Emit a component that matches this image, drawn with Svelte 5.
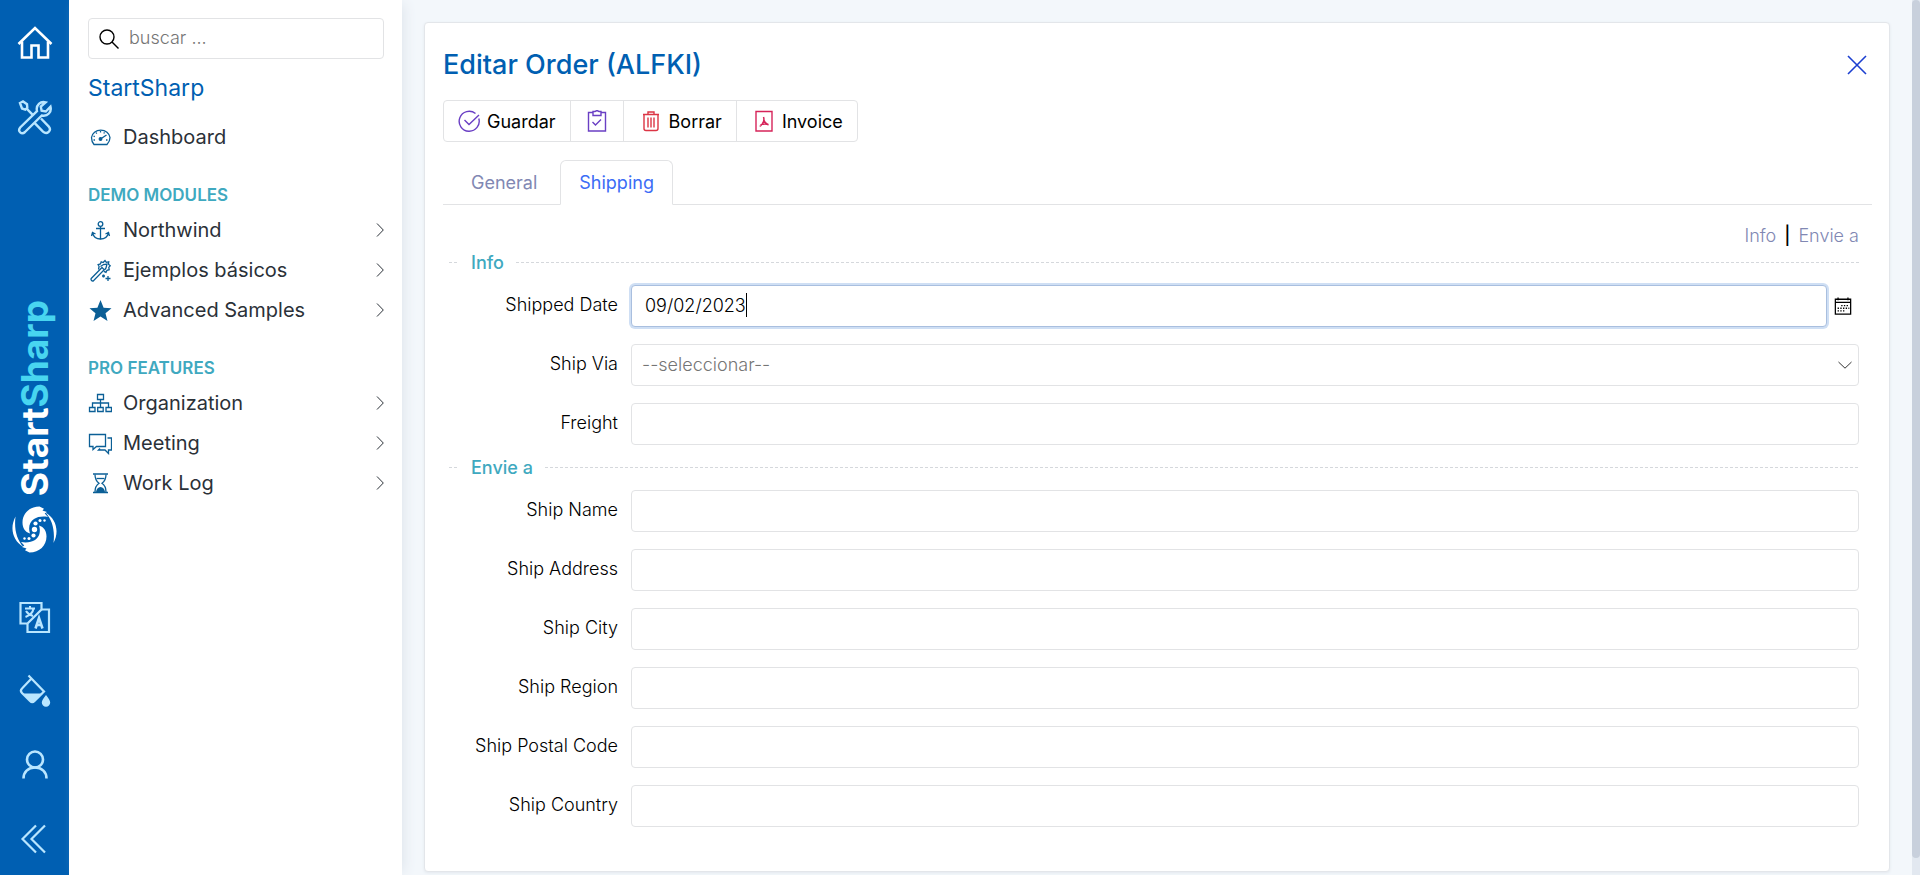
<script>
  const groups = [
    {
      title: 'DEMO MODULES',
      items: [
        { label: 'Northwind', icon: 'anchor' },
        { label: 'Ejemplos básicos', icon: 'wand' },
        { label: 'Advanced Samples', icon: 'star' }
      ]
    },
    {
      title: 'PRO FEATURES',
      items: [
        { label: 'Organization', icon: 'org' },
        { label: 'Meeting', icon: 'chat' },
        { label: 'Work Log', icon: 'hourglass' }
      ]
    }
  ];

  const shipFields = [
    { id: 'ship-name', label: 'Ship Name' },
    { id: 'ship-address', label: 'Ship Address' },
    { id: 'ship-city', label: 'Ship City' },
    { id: 'ship-region', label: 'Ship Region' },
    { id: 'ship-postal-code', label: 'Ship Postal Code' },
    { id: 'ship-country', label: 'Ship Country' }
  ];

  let shippedDate = $state('09/02/2023');
</script>

{#snippet menuIcon(name)}
  <svg class="menu-icon" viewBox="0 0 24 24" aria-hidden="true">
    {#if name === 'gauge'}
      <path d="M6 19.500h13c2-2 3-4.300 3-7A9.300 8.300 0 0 0 3.500 12.500c0 2.700.8 5 2.500 7z" />
      <path d="M12.500 14l6-4" />
      <circle cx="12.500" cy="14" r="1.300" fill="currentColor" />
      <path d="M12.500 6v1.500M8 7.500l.8 1.200M5.500 11l1.300.6M5.500 15h1.500M18 15h1.500M16.500 7.300l-.7 1.200" />
    {:else if name === 'anchor'}
      <circle cx="12.500" cy="6" r="2.300" />
      <path d="M12.500 8.300v13M8 10.500h9" />
      <path d="M4.500 15c1 3.800 4.200 6 8 6s7-2.200 8-6M3.500 18l1-3.500 3 1.500M21.500 18l-1-3.500-3 1.500" />
    {:else if name === 'wand'}
      <path d="M3.200 20.500L14 9.500l2.200 2.200L5.500 22.800c-1.500.7-3-.8-2.300-2.300z" />
      <path d="M10.500 11.500l.6-3-1-1.800 2.300-.8.8-2 2 .6L17 2.500l1.300 1.800 2.400-.4-.2 2.400 1.700 1.500-1.400 1.600.4 2.300-2.200.6-1 2-2.200-1" />
      <path d="M12.500 8.500l3-2 3.500-.5-1 4-1.500 2" />
      <path d="M20 18v5M17.500 20.500h5" />
      <path d="M15.500 16.500v3M14 18h3" stroke-width="1.600" />
    {:else if name === 'star'}
      <path
        d="M12.500 2l3.100 7.700 7.900.6-6 5 2 7.700-7-4.400-7 4.400 2-7.700-6-5 7.900-.6z"
        fill="currentColor"
        stroke="none"
      />
    {:else if name === 'org'}
      <path d="M9.500 3.500h6v5h-6zM1.500 16.500h5.500v4H1.500zM9.700 16.500h5.500v4H9.700zM18 16.500h5.500v4H18z" />
      <path d="M12.500 8.500v8M4.500 16.500v-4.500h16v4.500" />
    {:else if name === 'chat'}
      <path d="M1.500 3.500h16v12H8.500l-3.500 3v-3H1.500z" />
      <path d="M19.500 7h4v12h-3v3.500L17 19h-6.500l1.500-1.500" />
    {:else if name === 'hourglass'}
      <path d="M5 3h15M5 21.500h15" stroke-width="1.600" />
      <path d="M7 3.500c0 4.500 1.500 7 4 8.800C8.500 14 7 16.500 7 21M18 3.500c0 4.500-1.500 7-4 8.800 2.500 1.700 4 4.200 4 8.700" />
      <path d="M8 21c.3-3 2-4.500 4.500-5 2.500.5 4.200 2 4.500 5z" fill="currentColor" stroke="none" />
      <path d="M8.500 7.500h8" />
    {/if}
  </svg>
{/snippet}

<div class="shell">
  <nav class="rail" aria-label="Principal">
    <a class="rail-item active" href="#home" aria-label="Inicio">
      <svg viewBox="0 0 36 36" stroke-width="2.600" aria-hidden="true">
        <path d="M1.500 19L18 3l16.500 16" />
        <path d="M5 16.500V32.500h9.500V20.500h7v12H31V16.500" />
      </svg>
    </a>
    <a class="rail-item" href="#tools" aria-label="Herramientas">
      <svg viewBox="0 0 36 36" stroke-width="2.400" aria-hidden="true">
        <path d="M3 4l3-1.500L10 5.200l.3 3.600-2 1.800L5 9.500z" />
        <path d="M9.500 9.500l6 6.200" />
        <path
          d="M28.700 3.300c-5-1.500-10.200 2.500-8.700 8.900L3.200 28.500c-3 4 1.500 7.500 4.800 4.500l16.800-16.500c6 1.200 10-3.500 8.700-8.800l-4.700 4.800-4.200-.8-.8-4.200z"
        />
        <path d="M17.700 24.200l8.300 8.400c4 3.600 9.200-1.200 5.600-5.200L24 19.500" />
      </svg>
    </a>

    <a class="brand" href="#start">
      <span class="wordmark">Start<span class="accent">Sharp</span></span>
      <svg viewBox="0 0 46 48" aria-hidden="true">
        <path
          d="M27.500.5C17.500.5 10.500 7.500 10.500 16.500c0 5.500 2.500 9.500 7.500 11-2-6-.5-11.500 4-14.500 3.500-2.300 9-3 14-2l-3.300-3.500L35 6l-4.500-1.500L32 2.800z"
        />
        <path
          d="M17.500 46.500c10 0 17-7 17-16 0-5.500-2.500-9.500-7.500-11 2 6 .5 11.500-4 14.500-3.500 2.300-9 3-14 2l3.300 3.500L10 41l4.500 1.500L13 44.200z"
        />
        <path d="M3.500 10.500C-2.500 22 .5 34.500 11.500 41 4.500 33.500 2 23 3.500 10.500z" />
        <path d="M41.500 37C47.500 25.500 44.500 13 33.500 6.500c7 7.500 9.500 18 8 30.500z" />
        <circle cx="22.500" cy="23.500" r="2.700" />
        <circle cx="23.500" cy="17.500" r="2.100" />
        <circle cx="28" cy="14.500" r="1.500" />
        <circle cx="32.500" cy="14.500" r="1.200" />
        <circle cx="21.500" cy="29.500" r="2.100" />
        <circle cx="17" cy="32.500" r="1.500" />
        <circle cx="12.500" cy="32.500" r="1.200" />
      </svg>
    </a>

    <button class="rail-item" aria-label="Idioma">
      <svg viewBox="0 0 36 36" stroke-width="2.200" aria-hidden="true">
        <path d="M10.500 24.500H3.500V4h21v6.500L10.500 24.500" />
        <path d="M24.500 10.500h7.500V33h-21.500v-8.500" />
        <path d="M8 9.500h10M13 7v2.500M16.500 9.500c-.5 3.500-3 6.500-8 8.500M9 12c1.500 2.500 4 4 7 5" stroke-width="2" />
        <path d="M18.500 29.500L22 19l3.500 10.500M20 26h4" stroke-width="2.600" />
      </svg>
    </button>
    <button class="rail-item" aria-label="Tema">
      <svg viewBox="0 0 36 36" stroke-width="2.200" aria-hidden="true">
        <path d="M11.500 2.500l15.500 16-9.500 9.500c-1.500 1.500-3 1.500-4.500 0l-8-8c-1.500-1.500-1.500-3 0-4.500l9-9.500" />
        <path d="M5.500 20.500h20.500l-8.500 8h-4z" fill="currentColor" stroke="none" />
        <path
          d="M29 22c2.500 3.500 4.200 5.500 4.200 7.500a4.200 4.200 0 0 1-8.400 0c0-2 1.700-4 4.200-7.500z"
          fill="currentColor"
          stroke="none"
        />
      </svg>
    </button>
    <button class="rail-item" aria-label="Usuario">
      <svg viewBox="0 0 36 36" stroke-width="2.600" aria-hidden="true">
        <circle cx="18" cy="12.500" r="8" />
        <path d="M6.500 31.500c0-6.500 4.500-11 11.500-11s11.500 4.500 11.500 11" />
      </svg>
    </button>
    <button class="rail-item" aria-label="Contraer menú">
      <svg viewBox="0 0 36 36" stroke-width="2.200" aria-hidden="true">
        <path d="M19 4.500L5.500 18 19 31.500M28 4.500L14.500 18 28 31.500" />
      </svg>
    </button>
  </nav>

  <aside class="sidebar">
    <label class="search">
      <svg viewBox="0 0 20 20" aria-hidden="true">
        <circle cx="8" cy="8" r="7" />
        <path d="M13 13l6.500 6.500" />
      </svg>
      <input type="search" placeholder="buscar ..." aria-label="buscar" />
    </label>
    <h2>StartSharp</h2>
    <a class="menu-link" href="#dashboard">
      {@render menuIcon('gauge')}
      <span>Dashboard</span>
    </a>
    {#each groups as group}
      <h3>{group.title}</h3>
      {#each group.items as item}
        <a class="menu-link" href="#{item.icon}">
          {@render menuIcon(item.icon)}
          <span>{item.label}</span>
          <svg class="chevron" viewBox="0 0 8 14" aria-hidden="true"><path d="M1 0.500L7.300 7 1 13.500" /></svg>
        </a>
      {/each}
    {/each}
  </aside>

  <main>
    <section class="card">
      <header>
        <h1>Editar Order (ALFKI)</h1>
        <button class="close" aria-label="Cerrar">
          <svg viewBox="0 0 20 20" aria-hidden="true"><path d="M1 1l18 18M19 1L1 19" /></svg>
        </button>
      </header>

      <div class="toolbar">
        <button class="purple">
          <svg viewBox="0 0 22 22" aria-hidden="true">
            <path d="M20.800 8.500A10 10 0 1 1 17.500 3.500" />
            <path d="M6.500 10l4.500 4.500L21 5" />
          </svg>
          Guardar
        </button>
        <button class="purple" aria-label="Guardar y continuar">
          <svg viewBox="0 0 22 22" aria-hidden="true">
            <path d="M7 2.500H2.500v18.500h17V2.500H15" />
            <path d="M7 1.500v4h8v-4h-2L11 .5l-2 1z" />
            <path d="M6.500 12l3 3L15 9.500" />
          </svg>
        </button>
        <button class="red">
          <svg viewBox="0 0 22 22" aria-hidden="true">
            <path d="M3 4.500h16M8 4.500V2h6v2.500" />
            <path d="M4 4.500v14c0 1.500.5 2 2 2h10c1.500 0 2-.5 2-2v-14" />
            <path d="M8 7.500v10M11 7.500v10M14 7.500v10" />
          </svg>
          Borrar
        </button>
        <button class="crimson">
          <svg viewBox="0 0 22 22" aria-hidden="true">
            <path d="M3 1.500h16v19.500H3z" />
            <path d="M10.500 7c.8 2 .3 4.500-1 6.500-.8 1.500-1.800 2.500-2.800 2.800M10.800 10c.7 2.300 2.200 4 4.700 5M7.500 15c2.500-1.300 5-1.500 8-.5" stroke-width="1.500" />
          </svg>
          Invoice
        </button>
      </div>

      <div class="tabs" role="tablist">
        <button role="tab" aria-selected="false">General</button>
        <button role="tab" aria-selected="true" class="selected">Shipping</button>
      </div>

      <form>
        <nav class="anchors" aria-label="Secciones">
          <a href="#info">Info</a>
          <span class="bar">|</span>
          <a href="#envie">Envie a</a>
        </nav>

        <h4 id="info">Info</h4>
        <div class="fields">
          <div class="field">
            <label for="shipped-date">Shipped Date</label>
            <div class="date">
              <div class="date-box">
                <input id="shipped-date" type="text" bind:value={shippedDate} />
                <span class="caret"></span>
              </div>
              <button type="button" aria-label="Abrir calendario">
                <svg viewBox="0 0 20 20" aria-hidden="true">
                  <path d="M1.500 2.500h17v16.500h-17zM1.500 6h17" />
                  <path d="M4.500.5v3M15.500.5v3" />
                  <path d="M8 9.500h9M4 12.500h13M4 15.500h9" stroke-dasharray="1.500 1.500" />
                </svg>
              </button>
            </div>
          </div>
          <div class="field">
            <label for="ship-via">Ship Via</label>
            <div class="select">
              <select id="ship-via">
                <option>--seleccionar--</option>
              </select>
              <svg viewBox="0 0 14 8" aria-hidden="true"><path d="M0.500 1L7 7.200 13.500 1" /></svg>
            </div>
          </div>
          <div class="field">
            <label for="freight">Freight</label>
            <input id="freight" type="text" />
          </div>
        </div>

        <h4 id="envie">Envie a</h4>
        <div class="fields">
          {#each shipFields as field}
            <div class="field">
              <label for={field.id}>{field.label}</label>
              <input id={field.id} type="text" />
            </div>
          {/each}
        </div>
      </form>
    </section>
  </main>

  <div class="scrollbar" aria-hidden="true"><div class="thumb"></div></div>
</div>

<style>
  :global(body) {
    background: #f3f7fb;
  }

  .shell,
  .shell * {
    box-sizing: border-box;
  }

  .shell {
    display: flex;
    min-height: 100vh;
    font-family: Inter, 'Open Sans', sans-serif;
    font-size: 18px;
    font-weight: 300;
    color: #000;
  }

  button,
  input,
  select {
    font: inherit;
    color: inherit;
  }

  button {
    background: none;
    border: 0;
    padding: 0;
    cursor: pointer;
  }

  a {
    color: inherit;
    text-decoration: none;
  }

  svg {
    fill: none;
    stroke: currentColor;
    flex: none;
    display: block;
  }

  h1,
  h2,
  h3,
  h4 {
    margin: 0;
  }

  .rail {
    flex: none;
    width: 69px;
    background: #005fb2;
    color: #b9e6ff;
    display: flex;
    flex-direction: column;
    padding-top: 6px;
  }

  .rail-item {
    height: 74px;
    display: flex;
    align-items: center;
    justify-content: center;
  }

  .rail-item svg {
    width: 36px;
    height: 36px;
  }

  .rail-item.active {
    color: #fff;
  }

  .brand {
    margin-top: auto;
    padding-bottom: 26px;
    display: flex;
    flex-direction: column;
    align-items: center;
    gap: 10px;
    color: #fff;
  }

  .brand svg {
    width: 46px;
    height: 48px;
    fill: currentColor;
    stroke: none;
  }

  .wordmark {
    writing-mode: vertical-rl;
    transform: rotate(180deg);
    font-size: 37px;
    line-height: 44px;
    font-weight: 700;
  }

  .accent {
    color: #48d5f0;
  }

  .sidebar {
    flex: none;
    width: 333px;
    background: #fff;
    padding: 18px 18px 0 19px;
    box-shadow: 6px 0 12px -4px #dfe5ec;
  }

  .search {
    display: flex;
    align-items: center;
    gap: 10px;
    height: 41px;
    padding: 0 10px;
    border: 1px solid #e2e3e5;
    border-radius: 4px;
  }

  .search svg {
    width: 20px;
    height: 20px;
    stroke-width: 1.400;
  }

  .search input {
    flex: 1;
    min-width: 0;
    border: 0;
    outline: 0;
    padding: 0 0 2px;
    background: none;
  }

  .search input::placeholder {
    color: #757575;
    opacity: 1;
  }

  h2 {
    margin: 14px 0;
    font-size: 23px;
    line-height: 30px;
    font-weight: 400;
    color: #005fb2;
  }

  h3 {
    margin-top: 26px;
    font-size: 17px;
    line-height: 24px;
    height: 27px;
    font-weight: 600;
    color: #3fa9c0;
  }

  .menu-link {
    display: flex;
    align-items: center;
    gap: 11px;
    height: 40px;
    font-size: 20px;
    font-weight: 400;
    color: #2b3138;
  }

  .menu-icon {
    width: 24px;
    height: 24px;
    color: #0b5f96;
    stroke-width: 1.300;
  }

  .chevron {
    width: 8px;
    height: 14px;
    margin-left: auto;
  }

  main {
    flex: 1;
    min-width: 0;
    padding: 22px 22px 4px;
  }

  .card {
    background: #fff;
    border: 1px solid #e3e6ea;
    border-radius: 4px;
    padding: 22px 17px 36px 18px;
    box-shadow: 0 1px 3px #e3e8ee;
  }

  header {
    display: flex;
    align-items: center;
    justify-content: space-between;
    height: 40px;
    padding-right: 5px;
  }

  h1 {
    font-size: 27px;
    line-height: 40px;
    font-weight: 500;
    color: #005fb2;
  }

  .close {
    color: #1c3fd0;
  }

  .close svg {
    width: 20px;
    height: 20px;
    stroke-width: 1.600;
  }

  .toolbar {
    display: flex;
    width: fit-content;
    height: 42px;
    margin-top: 15px;
    border: 1px solid #e2e3e5;
    border-radius: 4px;
  }

  .toolbar button {
    display: flex;
    align-items: center;
    gap: 7px;
    padding: 0 14px;
    font-weight: 400;
  }

  .toolbar button:nth-child(2) {
    padding: 0 15px;
  }

  .toolbar button:nth-child(n + 3) {
    padding: 0 14px 0 16px;
  }

  .toolbar button + button {
    border-left: 1px solid #e2e3e5;
  }

  .toolbar svg {
    width: 22px;
    height: 22px;
    stroke-width: 1.400;
  }

  .purple svg {
    color: #6a3fc4;
  }

  .red svg {
    color: #dc3545;
  }

  .crimson svg {
    color: #d6245a;
  }

  .tabs {
    display: flex;
    margin-top: 18px;
    border-bottom: 1px solid #e2e3e5;
  }

  .tabs button {
    height: 45px;
    margin-bottom: -1px;
    padding: 0 18px;
    border: 1px solid transparent;
    border-radius: 6px 6px 0 0;
    font-weight: 400;
    color: #8188b3;
  }

  .tabs button:first-child {
    padding: 0 22px 0 27px;
  }

  .tabs .selected {
    border-color: #e2e3e5 #e2e3e5 #fff;
    background: #fff;
    color: #3c6cf6;
  }

  form {
    padding: 19px 13px 0 6px;
  }

  .anchors {
    display: flex;
    justify-content: flex-end;
    gap: 8px;
    line-height: 24px;
    color: #8188b3;
  }

  .bar {
    color: #000;
    font-weight: 500;
  }

  h4 {
    display: flex;
    align-items: center;
    gap: 12px;
    height: 28px;
    font-size: 18px;
    font-weight: 500;
    color: #3fa9c0;
  }

  h4::before,
  h4::after {
    content: '';
    width: 10px;
    height: 1px;
    background: repeating-linear-gradient(90deg, #d5d8dc 0 3px, transparent 3px 5px);
  }

  h4::after {
    flex: 1;
  }

  .fields {
    display: flex;
    flex-direction: column;
    gap: 17px;
    padding: 9px 0 8px;
  }

  .field {
    display: grid;
    grid-template-columns: 169px minmax(0, 1fr);
    column-gap: 13px;
    align-items: center;
  }

  .field label {
    text-align: right;
    line-height: 24px;
    padding-bottom: 2px;
  }

  .field input,
  .field select {
    display: block;
    width: 100%;
    height: 42px;
    padding: 0 13px;
    border: 1px solid #e2e3e5;
    border-radius: 4px;
    background: #fff;
    outline: 0;
  }

  .date {
    display: flex;
    align-items: center;
    gap: 7px;
    padding-right: 7px;
  }

  .date-box {
    position: relative;
    flex: 1;
  }

  .field .date-box input {
    padding-bottom: 2px;
    border-color: #a9bfdf;
    box-shadow: 0 0 0 2px #cfdff4;
  }

  .caret {
    position: absolute;
    left: 115px;
    top: 8px;
    width: 1px;
    height: 24px;
    background: #000;
  }

  .date svg {
    width: 18px;
    height: 20px;
    stroke-width: 1.400;
  }

  .select {
    position: relative;
  }

  .field select {
    appearance: none;
    padding: 0 32px 2px 10px;
    color: #757575;
  }

  .select svg {
    position: absolute;
    right: 7px;
    top: 17px;
    width: 14px;
    height: 8px;
    color: #333;
    pointer-events: none;
  }

  .scrollbar {
    flex: none;
    width: 8px;
    background: #e2e8f0;
  }

  .thumb {
    height: 98%;
    border-radius: 4px;
    background: #c8d0dc;
  }
</style>
